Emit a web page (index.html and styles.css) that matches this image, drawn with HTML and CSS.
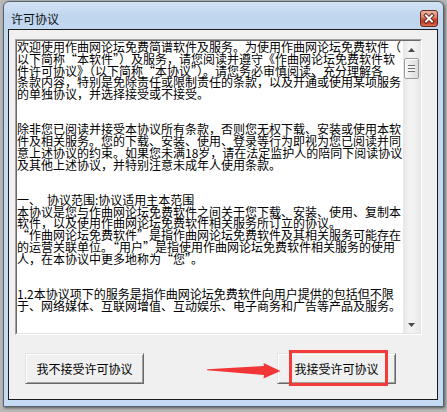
FILE: index.html
```html
<!DOCTYPE html>
<html lang="zh-CN">
<head>
<meta charset="utf-8">
<title>许可协议</title>
<link rel="stylesheet" href="styles.css">
</head>
<body>
<div class="window">
  <div class="titlebar">
    <span class="title">许可协议</span>
    <span class="close">
      <svg width="16" height="15" viewBox="0 0 16 15">
        <path d="M5 4.5 L11 10.5 M11 4.5 L5 10.5" stroke="#5a1a0e" stroke-width="3.8" stroke-linecap="square" fill="none"/>
        <path d="M5 4.5 L11 10.5 M11 4.5 L5 10.5" stroke="#ffffff" stroke-width="2" stroke-linecap="square" fill="none"/>
      </svg>
    </span>
  </div>
  <div class="client">
    <div class="editbox">
      <div class="editbox-inner">
        <div class="text">欢迎使用作曲网论坛免费简谱软件及服务。为使用作曲网论坛免费软件（
以下简称“本软件”）及服务，请您阅读并遵守《作曲网论坛免费软件软
件许可协议》（以下简称“本协议”）。请您务必审慎阅读、充分理解各
条款内容，特别是免除责任或限制责任的条款，以及开通或使用某项服务
的单独协议，并选择接受或不接受。


除非您已阅读并接受本协议所有条款，否则您无权下载、安装或使用本软
件及相关服务。您的下载、安装、使用、登录等行为即视为您已阅读并同
意上述协议的约束。如果您未满18岁，请在法定监护人的陪同下阅读协议
及其他上述协议，并特别注意未成年人使用条款。


一、&ensp;协议范围:协议适用主本范围
本协议是您与作曲网论坛免费软件之间关于您下载、安装、使用、复制本
软件，以及使用作曲网论坛免费软件相关服务所订立的协议。
“作曲网论坛免费软件”是指作曲网论坛免费软件及其相关服务可能存在
的运营关联单位。“用户”是指使用作曲网论坛免费软件相关服务的使用
人，在本协议中更多地称为“您”。


1.2本协议项下的服务是指作曲网论坛免费软件向用户提供的包括但不限
于、网络媒体、互联网增值、互动娱乐、电子商务和广告等产品及服务。</div>
        <div class="scrollbar">
          <div class="sb-btn"><svg width="7" height="4" viewBox="0 0 7 4"><path d="M0 4 L3.5 0 L7 4 Z" fill="#4a4a4a"/></svg></div>
          <div class="thumb"><span class="grip"></span></div>
          <div class="track"></div>
          <div class="sb-btn"><svg width="7" height="4" viewBox="0 0 7 4"><path d="M0 0 L3.5 4 L7 0 Z" fill="#4a4a4a"/></svg></div>
        </div>
      </div>
    </div>
    <div class="buttons">
      <button class="btn">我不接受许可协议</button>
      <div class="accept-wrap">
        <button class="btn">我接受许可协议</button>
        <span class="highlight"></span>
      </div>
      <svg class="arrow" width="78" height="22" viewBox="205 360 78 22">
        <polygon points="207,369.2 264,366 263.5,363 280.5,371 263.5,378.5 264,375 207,370.3" fill="#f23636"/>
      </svg>
    </div>
  </div>
</div>
</body>
</html>
```
FILE: styles.css
```css
html, body {
  margin: 0;
  padding: 0;
}
body {
  width: 447px;
  height: 412px;
  overflow: hidden;
  background: #b8b8b8;
  font-family: "Noto Sans CJK SC", "Noto Sans", sans-serif;
  color: #000;
}
.window {
  box-sizing: border-box;
  width: 441px;
  height: 406px;
  margin: 1px 0 0 3px;
  border: 1px solid #56626e;
  border-radius: 6px 6px 0 0;
  padding: 0 5px 6px 4px;
  background: linear-gradient(to bottom, #d3e3f4 0px, #c0d6ee 14px, #c3d9f1 40px, #c5dbf3 100%);
  box-shadow: 1px 1px 3px rgba(0, 0, 0, 0.55);
  display: flex;
  flex-direction: column;
}
.titlebar {
  height: 27px;
  flex: none;
  display: flex;
  justify-content: space-between;
  align-items: flex-start;
}
.title {
  font-size: 12px;
  line-height: 12px;
  margin: 11px 0 0 3px;
  color: #111;
}
.close {
  box-sizing: border-box;
  width: 18px;
  height: 17px;
  margin-top: 8px;
  border: 1px solid #6b2a1c;
  border-radius: 3px;
  background: linear-gradient(to bottom, #eab1a2 0%, #dc8a74 40%, #c9482f 55%, #c8452d 80%, #d9735a 100%);
  display: flex;
  align-items: center;
  justify-content: center;
}
.client {
  flex: 1;
  border: 1px solid #1c1c1c;
  background: #f0f0f0;
  padding: 9px 0 0 6px;
}
.editbox {
  box-sizing: border-box;
  width: 407px;
  height: 296px;
  border: 1px solid;
  border-color: #a0a0a0 #ffffff #ffffff #a0a0a0;
}
.editbox-inner {
  height: 100%;
  box-sizing: border-box;
  border: 1px solid;
  border-color: #696969 #e3e3e3 #e3e3e3 #696969;
  background: #fff;
  display: flex;
}
.text {
  width: 386px;
  flex: none;
  white-space: pre;
  font-size: 12px;
  line-height: 11.75px;
  padding-left: 0;
  color: #000;
}
.scrollbar {
  flex: 1;
  display: flex;
  flex-direction: column;
  background: linear-gradient(to right, #e6e6e6, #f4f4f4 40%, #f0f0f0 70%, #e8e8e8);
}
.sb-btn {
  height: 17px;
  flex: none;
  display: flex;
  align-items: center;
  justify-content: center;
}
.thumb {
  box-sizing: border-box;
  height: 21px;
  margin: 0 1px;
  border: 1px solid #9a9a9a;
  border-radius: 2px;
  background: linear-gradient(to right, #f6f6f6, #e9e9e9 50%, #dcdcdc);
  box-shadow: inset 1px 1px 0 #ffffff;
  display: flex;
  align-items: center;
  justify-content: center;
}
.grip {
  width: 7px;
  height: 7px;
  background: repeating-linear-gradient(to bottom, #6e6e6e 0, #6e6e6e 1px, #f6f6f6 1px, #f6f6f6 3px);
}
.track {
  flex: 1;
}
.buttons {
  position: relative;
  display: flex;
  margin-top: 18px;
  padding-left: 10px;
}
.btn {
  box-sizing: border-box;
  width: 119px;
  height: 31px;
  padding: 0;
  margin: 0;
  font-family: "Noto Sans CJK SC", "Noto Sans", sans-serif;
  font-size: 12px;
  line-height: 12px;
  color: #000;
  background: #f0f0f0;
  border: 1px solid;
  border-color: #e3e3e3 #696969 #696969 #e3e3e3;
  box-shadow: inset 1px 1px 0 #ffffff, inset -1px -1px 0 #a0a0a0;
}
.accept-wrap {
  position: relative;
  margin-left: 133px;
}
.highlight {
  position: absolute;
  left: 12px;
  top: -3px;
  width: 99px;
  height: 36px;
  box-sizing: border-box;
  border: 3px solid #f53a3a;
}
.arrow {
  position: absolute;
  left: 190px;
  top: 7px;
}
```
